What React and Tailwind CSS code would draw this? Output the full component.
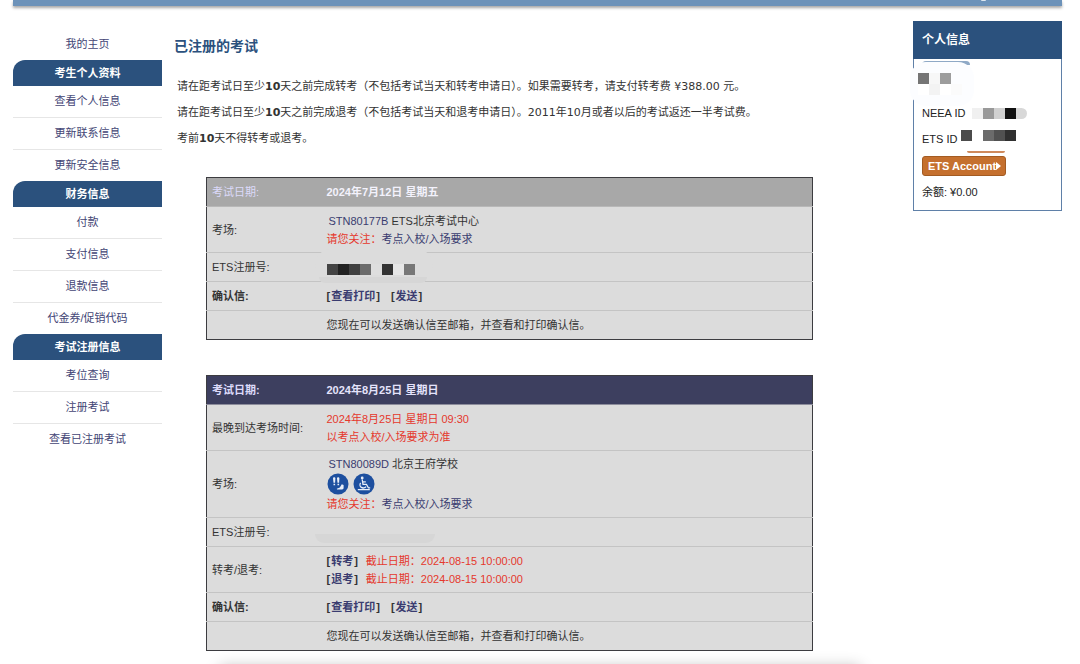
const menu = [
    { title: "考生个人资料", items: ["查看个人信息", "更新联系信息", "更新安全信息"] },
    { title: "财务信息", items: ["付款", "支付信息", "退款信息", "代金券/促销代码"] },
    { title: "考试注册信息", items: ["考位查询", "注册考试", "查看已注册考试"] },
];

function Sidebar() {
    return (
        <nav className="w-[149px] shrink-0 pt-[22px] text-center text-[11px] text-[#434575]">
            <a href="#" className="flex h-8 items-center justify-center">我的主页</a>
            {menu.map((group) => (
                <div key={group.title}>
                    <h2 className="flex h-[26px] items-center justify-center rounded-tl-xl bg-[#2b517d] font-bold text-white">{group.title}</h2>
                    <ul className="divide-y divide-[#e6e6e6]">
                        {group.items.map((item) => (
                            <li key={item}>
                                <a href="#" className="flex h-[31px] items-center justify-center">{item}</a>
                            </li>
                        ))}
                    </ul>
                </div>
            ))}
        </nav>
    );
}

function Row({ label, bold, height, children }) {
    return (
        <tr className={`border-b border-[#c4c4c4] last:border-b-0 ${height}`}>
            <th scope="row" className={`w-[116px] pl-[5px] text-left ${bold ? "font-bold" : "font-normal"}`}>{label}</th>
            <td className="pl-1">{children}</td>
        </tr>
    );
}

function ExamTable({ date, past, children }) {
    return (
        <table className="w-full border-collapse border border-[#3c3c40] bg-[#dcdcdc] text-[11px] leading-[18px] text-[#333]">
            <thead>
                <tr className={`h-[29px] border-b text-left ${past ? "border-[#b8b8b8] bg-[#a8a8a8]" : "border-[#8d8d9c] bg-[#3d3f5f]"}`}>
                    <th className={`w-[116px] pl-[5px] text-[#dcdafa] ${past ? "font-normal" : "font-bold"}`}>考试日期:</th>
                    <th className={`pl-1 font-bold ${past ? "text-[#f3f2fc]" : "text-[#e4e3fb]"}`}>{date}</th>
                </tr>
            </thead>
            <tbody>{children}</tbody>
        </table>
    );
}

function Action({ children }) {
    return (
        <span className="mr-2 font-bold">
            [<a href="#" className="mx-px text-[#3a3c70]">{children}</a>]
        </span>
    );
}

function SiteNote() {
    return (
        <p>
            <span className="text-[#e5382c]">请您关注：</span>
            <a href="#" className="text-[#3a3c70]">考点入校/入场要求</a>
        </p>
    );
}

function Confirmation() {
    return (
        <>
            <Row label="确认信:" bold height="h-[29px]"><Action>查看打印</Action> <Action>发送</Action></Row>
            <Row label="" height="h-[29px]">您现在可以发送确认信至邮箱，并查看和打印确认信。</Row>
        </>
    );
}

// row of grey squares that hides a private value
function Mosaic({ colors }) {
    return (
        <span className="flex" aria-hidden="true">
            {colors.map((color, i) => (
                <span key={i} className="size-[11px]" style={{ backgroundColor: color }} />
            ))}
        </span>
    );
}

function RestroomIcon() {
    return (
        <svg viewBox="0 0 22 22" className="size-[22px]" aria-label="洗手间">
            <circle cx="11" cy="11" r="10.5" fill="#1d4f9f" />
            <g fill="#e8eef8">
                <path d="M6 5.2c.2-1.4 2.2-1.4 2.4 0l-.3 4.6H6.5zM10 5.2c.2-1.4 2.2-1.4 2.4 0l-.3 4.6h-1.6z" />
                <path d="M6.5 10.8h1.6v1.4H6.5zM10.5 10.8h1.6v1.4h-1.6z" />
                <path d="M9.8 15.8l3-1.2 2-3.4 1.8.8v3.6l-1.3 1H10z" />
            </g>
        </svg>
    );
}

function WheelchairIcon() {
    return (
        <svg viewBox="0 0 22 22" className="size-[22px]" aria-label="无障碍设施">
            <circle cx="11" cy="11" r="10.5" fill="#1d4f9f" />
            <circle cx="9.2" cy="5" r="1.4" fill="#e8eef8" />
            <g fill="none" stroke="#e8eef8" strokeWidth="1.3">
                <path d="M9.2 6.5l.8 4.8h3.4l2 3.6h1.8M9.6 8.8h3.2" />
                <path d="M7.6 9.8a3.3 3.3 0 1 0 5.4 3.8M4.8 16.6h12" />
            </g>
        </svg>
    );
}

function ProfileCard() {
    return (
        <aside className="mt-[15px] h-fit w-[149px] shrink-0 border border-[#5f80a8] text-[11px] text-[#222]">
            <h2 className="-mx-px -mt-px flex h-[38px] items-center bg-[#2b517d] pl-[9px] text-[12px] font-bold text-white">个人信息</h2>
            <div className="flex flex-col items-start pb-[10px] pl-2">
                <div className="relative -ml-1 mt-[14px] mb-[5px]">
                    <span className="absolute -top-3 left-1 h-1 w-12 rounded-t-full bg-[#8fa9c6]" />
                    <span className="absolute -top-[11px] -left-2 h-[44px] w-16 rounded-2xl bg-[#fcfdff]" />
                    <div className="relative">
                        <Mosaic colors={["#757575", "#f7f7f7", "#9d9d9d"]} />
                        <Mosaic colors={["#fff", "#f3f3f3", "#fff", "#fbfbfb"]} />
                    </div>
                </div>
                <p className="flex h-[26px] items-center">
                    NEEA ID
                    <span className="ml-[7px] overflow-hidden rounded-r-md"><Mosaic colors={["#f0f0f0", "#999", "#d0d0d0", "#111", "#d8d8d8"]} /></span>
                </p>
                <p className="flex h-[26px] items-center">
                    ETS ID
                    <span className="mb-2 ml-1"><Mosaic colors={["#4b4b4b", "#fff", "#6b6b6b", "#515151", "#303030"]} /></span>
                </p>
                <div className="relative mt-1">
                    <span className="absolute -top-[5px] left-[45px] h-[2px] w-[38px] rounded-b-full bg-[#cf8a5c]" />
                    <button type="button" className="flex h-5 items-center rounded-[3px] border border-[#a35b22] bg-[#c5702e] pr-1 pl-[5px] font-bold text-white">
                        ETS Account
                        <svg viewBox="0 0 5 8" className="h-2 w-[5px]"><path d="M0 0l5 4-5 4z" fill="#fff" /></svg>
                    </button>
                </div>
                <p className="mt-2 leading-4">余额: ¥0.00</p>
            </div>
        </aside>
    );
}

export default function App() {
    return (
        <div className="relative min-h-screen overflow-hidden bg-white pr-[18px] pl-[13px] font-['Liberation_Sans','Noto_Sans_CJK_SC',sans-serif]">
            <header className="flex h-[6px] justify-end bg-[#6c92b9] pr-[76px] shadow-[0_2px_3px_rgba(0,0,0,0.35)]">
                <span className="h-px w-[5px] rounded-b-full bg-[#dde6ef]" />
            </header>
            <div className="flex">
                <Sidebar />
                <main className="min-w-0 flex-1 pr-[100px] pl-3">
                    <h1 className="mt-[30px] text-[14px] leading-5 font-bold text-[#2b517d]">已注册的考试</h1>
                    <div className="mt-[18px] ml-[3px] font-['DejaVu_Sans','Noto_Sans_CJK_SC',sans-serif] text-[11px] leading-[26px] whitespace-nowrap text-[#333]">
                        <p>请在距考试日至少<b>10</b>天之前完成转考（不包括考试当天和转考申请日）。如果需要转考，请支付转考费 ¥388.00 元。</p>
                        <p>请在距考试日至少<b>10</b>天之前完成退考（不包括考试当天和退考申请日）。2011年10月或者以后的考试返还一半考试费。</p>
                        <p>考前<b>10</b>天不得转考或退考。</p>
                    </div>
                    <div className="mt-[25px] ml-8 flex flex-col gap-[35px]">
                        <ExamTable date="2024年7月12日 星期五" past>
                            <Row label="考场:" height="h-[46px]">
                                <p><a href="#" className="ml-0.5 text-[#3a3c70]">STN80177B</a> ETS北京考试中心</p>
                                <SiteNote />
                            </Row>
                            <Row label="ETS注册号:" height="h-[29px]">
                                <div className="relative">
                                    <span className="absolute -top-[11px] -left-3 h-[34px] w-[118px] rounded-2xl bg-[#dcdcdc]" />
                                    <span className="absolute top-[17px] -left-2 h-[6px] w-[108px] rounded-b-full bg-[#d6d6d6]" />
                                    <div className="relative pt-1">
                                        <Mosaic colors={["#444", "#222", "#404040", "#6b6b6b", "#dedede", "#333", "#e6e6e6", "#777"]} />
                                    </div>
                                </div>
                            </Row>
                            <Confirmation />
                        </ExamTable>
                        <ExamTable date="2024年8月25日 星期日">
                            <Row label="最晚到达考场时间:" height="h-[46px]">
                                <p className="text-[#e5382c]">2024年8月25日 星期日 09:30<br />以考点入校/入场要求为准</p>
                            </Row>
                            <Row label="考场:" height="h-[67px]">
                                <p><a href="#" className="ml-0.5 text-[#3a3c70]">STN80089D</a> 北京王府学校</p>
                                <div className="flex gap-1"><RestroomIcon /><WheelchairIcon /></div>
                                <SiteNote />
                            </Row>
                            <Row label="ETS注册号:" height="h-[29px]">
                                <div className="relative h-[18px]">
                                    <span className="absolute top-[11px] -left-3 h-[9px] w-[120px] rounded-b-full bg-[#d6d6d6]" />
                                </div>
                            </Row>
                            <Row label="转考/退考:" height="h-[46px]">
                                <p><Action>转考</Action><span className="text-[#e5382c]">截止日期：2024-08-15 10:00:00</span></p>
                                <p><Action>退考</Action><span className="text-[#e5382c]">截止日期：2024-08-15 10:00:00</span></p>
                            </Row>
                            <Confirmation />
                        </ExamTable>
                    </div>
                </main>
                <ProfileCard />
            </div>
            <div className="pointer-events-none absolute right-[220px] -bottom-6 left-[220px] h-5 shadow-[0_0_16px_rgba(0,0,0,0.3)]" />
        </div>
    );
}
